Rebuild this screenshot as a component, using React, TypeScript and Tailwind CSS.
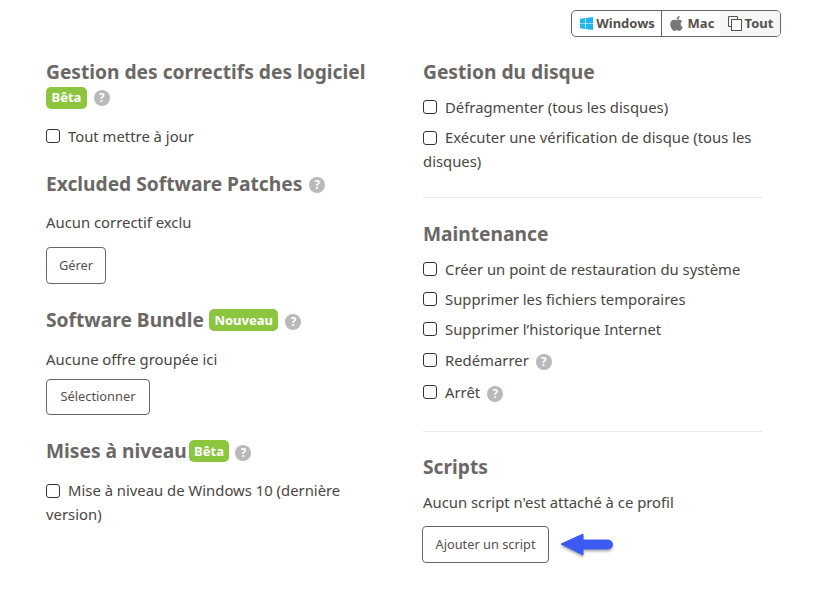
import { FaApple, FaWindows } from "react-icons/fa";

const Help = ({ className = "" }: { className?: string }) => (
  <span
    className={`inline-flex h-4 w-4 items-center justify-center rounded-full bg-[#b9b9b9] text-[11.5px] leading-none font-bold text-white ${className}`}
  >
    ?
  </span>
);

const Badge = ({ label }: { label: string }) => (
  <span className="inline-flex h-[22px] items-center rounded-[5px] bg-[#8cc63f] px-[5.5px] text-[13px] font-bold text-white">
    {label}
  </span>
);

const Heading = ({ children, className = "" }: { children: React.ReactNode; className?: string }) => (
  <h3 className={`text-[19.2px] leading-[26px] font-bold text-[#6b6765] ${className}`}>{children}</h3>
);

const Box = () => (
  <span className="mr-[8px] inline-block h-[14px] w-[14px] shrink-0 rounded-[3px] border border-[#333] align-[-2px]" />
);

const Check = ({ label, help, className = "" }: { label: string; help?: boolean; className?: string }) => (
  <div className={`flex items-center leading-6 ${className}`}>
    <Box />
    <span>{label}</span>
    {help && <Help className="ml-[7px] mt-[3px]" />}
  </div>
);

const OutlineButton = ({ label, className = "" }: { label: string; className?: string }) => (
  <button className={`block rounded-[4px] border border-[#666] text-[12.8px] text-[#55504d] ${className}`}>
    {label}
  </button>
);

export default function App() {
  return (
    <div className="h-[611px] w-[828px] bg-white pt-[10px] font-['Noto_Sans',sans-serif] text-[14.85px] text-[#4a4543]">
      <div className="flex justify-end pr-[47px]">
        <div className="flex h-[27px] w-[210px] overflow-hidden rounded-[5px] border border-[#666] text-[13px] font-bold text-[#55504d]">
          <div className="flex w-[89px] items-center justify-center gap-[2px] pl-[1px]">
            <FaWindows className="text-[15px] text-[#22b5ee]" />
            Windows
          </div>
          <div className="flex w-[59px] items-center justify-center gap-[3px] border-l border-[#666]">
            <FaApple className="text-[17px] text-[#777]" />
            Mac
          </div>
          <div className="flex flex-1 items-center justify-center gap-[1px] bg-[#f6f6f6]">
            <svg width="17" height="17" viewBox="0 0 17 17" fill="none" stroke="#55504d" strokeWidth="1">
              <path d="M4.5 11.5H1.5V1.5H10.5V4.5" />
              <rect x="4.5" y="4.5" width="10" height="11" fill="white" />
            </svg>
            Tout
          </div>
        </div>
      </div>

      <div className="mt-[21px] grid grid-cols-[377px_339px] pl-[46px]">
        <div>
          <Heading className="mt-[1px]">Gestion des correctifs des logiciel</Heading>
          <div className="mt-[2px] flex h-[22px] items-center gap-[7px]">
            <Badge label="Bêta" />
            <Help />
          </div>
          <Check label="Tout mettre à jour" className="mt-[15px]" />
          <Heading className="mt-[23px] flex items-center gap-[7px]">
            Excluded Software Patches <Help className="mt-[2px]" />
          </Heading>
          <p className="mt-[13px] leading-6">Aucun correctif exclu</p>
          <OutlineButton label="Gérer" className="mt-[13px] h-[37px] w-[60px]" />
          <Heading className="mt-[23px] flex items-center gap-[5px]">
            Software Bundle <Badge label="Nouveau" />
            <Help className="ml-[2px] mt-[3px]" />
          </Heading>
          <p className="mt-[14px] leading-6">Aucune offre groupée ici</p>
          <OutlineButton label="Sélectionner" className="mt-[8px] h-[36px] w-[104px]" />
          <Heading className="mt-[23px] flex items-center gap-[2px]">
            Mises à niveau <Badge label="Bêta" />
            <Help className="ml-[4px] mt-[3px]" />
          </Heading>
          <div className="mt-[14px] w-[310px] leading-6">
            <Box />
            Mise à niveau de Windows 10 (dernière version)
          </div>
        </div>

        <div>
          <Heading className="mt-[1px]">Gestion du disque</Heading>
          <Check label="Défragmenter (tous les disques)" className="mt-[10px]" />
          <div className="mt-[6px] leading-6">
            <Box />
            Exécuter une vérification de disque (tous les disques)
          </div>
          <hr className="mt-[24px] border-[#e8e8e8]" />
          <Heading className="mt-[23px]">Maintenance</Heading>
          <Check label="Créer un point de restauration du système" className="mt-[10px]" />
          <Check label="Supprimer les fichiers temporaires" className="mt-[6px]" />
          <Check label="Supprimer l’historique Internet" className="mt-[6px]" />
          <Check label="Redémarrer" help className="mt-[7px]" />
          <Check label="Arrêt" help className="mt-[8px]" />
          <hr className="mt-[27px] border-[#e8e8e8]" />
          <Heading className="mt-[22px]">Scripts</Heading>
          <p className="mt-[10px] leading-6">Aucun script n'est attaché à ce profil</p>
          <div className="-ml-px mt-[12px] flex items-center gap-[11px]">
            <OutlineButton label="Ajouter un script" className="h-[37px] w-[127px]" />
            <svg width="56" height="30" viewBox="0 0 56 30" className="mt-[3px]">
              <path
                d="M1 13L23 3V9H48a4.5 4.5 0 0 1 0 9H23V24Z"
                fill="#3d5af1"
                stroke="#3d5af1"
                strokeLinejoin="round"
                style={{ filter: "drop-shadow(0 2px 1px rgba(0,0,0,.3))" }}
              />
            </svg>
          </div>
        </div>
      </div>
    </div>
  );
}
